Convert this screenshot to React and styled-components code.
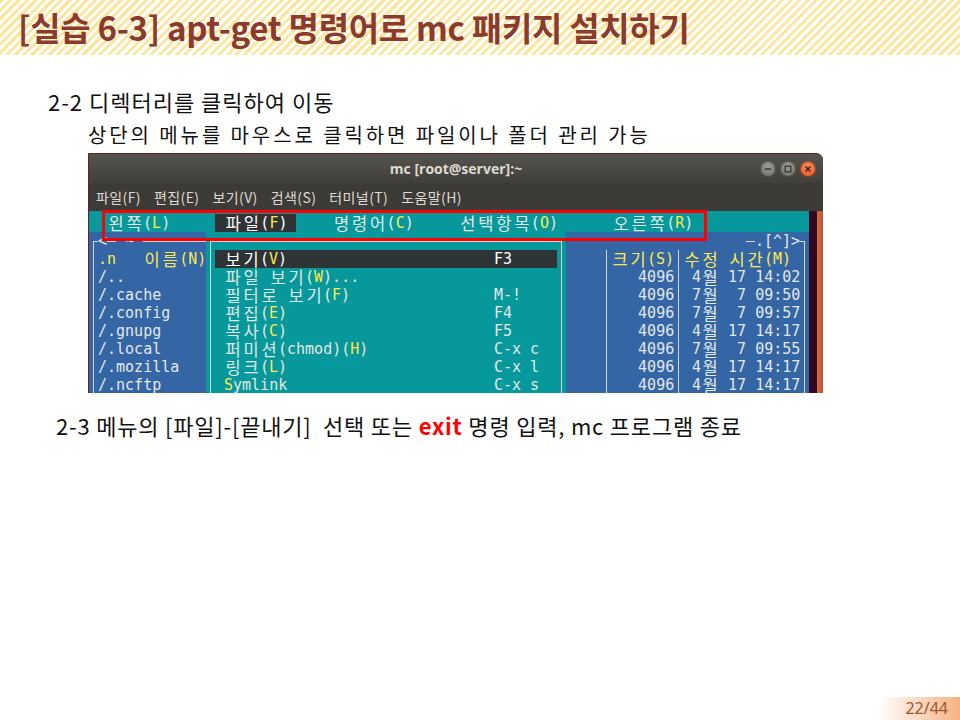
import React from 'react';
import styled, { createGlobalStyle, css } from 'styled-components';

const Global = createGlobalStyle`
  html, body { margin: 0; padding: 0; background: #fff; }
  body { font-family: "Noto Sans CJK KR", "Noto Sans", sans-serif; }
`;

const CELL = 9;
const C = {
  teal: '#06989a',
  blue: '#3465a4',
  dark: '#2e3436',
  text: '#e2e8e6',
  yellow: '#fce94f',
  line: '#d3d7cf',
};

const Page = styled.div`
  width: 960px;
  height: 720px;
  display: flex;
  flex-direction: column;
  overflow: hidden;
  background: #fff;
`;

const TitleBand = styled.header`
  height: 55px;
  flex: none;
  display: flex;
  align-items: center;
  padding-left: 18px;
  box-sizing: border-box;
  background: repeating-linear-gradient(135deg, #fce7a0 0 3px, #ffffff 3px 6px);
`;

const Title = styled.h1`
  margin: 0;
  font-family: "Noto Sans CJK KR", sans-serif;
  font-weight: 700;
  font-size: 33px;
  line-height: 1;
  color: #8b3a2e;
  letter-spacing: -0.3px;
  white-space: nowrap;
`;

const Para = styled.p`
  margin: ${p => p.$mt}px 0 0 ${p => p.$ml}px;
  font-size: ${p => p.$size}px;
  letter-spacing: ${p => p.$ls || 0}px;
  line-height: 30px;
  color: #111;
  white-space: pre;
  flex: none;
`;

const Red = styled.b`
  color: #ff0000;
  font-weight: 700;
`;

/* ---------- screenshot ---------- */
const Shot = styled.div`
  position: relative;
  margin: 3px 0 0 88px;
  width: 735px;
  height: 240px;
  flex: none;
`;

const Win = styled.div`
  height: 100%;
  display: flex;
  flex-direction: column;
  overflow: hidden;
  box-sizing: border-box;
  border-left: 1px solid #6a2020;
  border-top: 1px solid #5a2323;
  border-top-right-radius: 7px;
  background: #3c3b37;
`;

const TitleBar = styled.div`
  height: 29px;
  flex: none;
  display: grid;
  grid-template-columns: 1fr auto 1fr;
  align-items: center;
  background: linear-gradient(#55534d, #403f3b);
`;

const WinTitle = styled.div`
  grid-column: 2;
  font-family: "Open Sans", "Noto Sans", sans-serif;
  font-weight: 700;
  font-size: 14px;
  color: #dfdbd2;
  white-space: nowrap;
`;

const Btns = styled.div`
  grid-column: 3;
  justify-self: end;
  display: flex;
  gap: 4px;
  padding-right: 7px;
`;

const WinBtn = styled.div`
  width: 16px;
  height: 16px;
  border-radius: 50%;
  display: flex;
  align-items: center;
  justify-content: center;
  box-shadow: inset 0 0 0 1px rgba(0, 0, 0, 0.35);
  background: ${p =>
    p.$close
      ? 'radial-gradient(circle at 50% 35%, #f68c5c, #de4f1e)'
      : 'radial-gradient(circle at 50% 35%, #a09d95, #66645e)'};
`;

const MenuBar = styled.div`
  height: 28px;
  flex: none;
  display: flex;
  align-items: center;
  gap: 13px;
  padding-left: 7px;
  font-family: "Noto Sans CJK KR", sans-serif;
  font-size: 14px;
  letter-spacing: 0.4px;
  color: #dfdbd2;
  background: #3c3b37;
`;

const Terminal = styled.div`
  flex: 1;
  display: flex;
  overflow: hidden;
`;

const MC = styled.div`
  width: ${80 * CELL}px;
  flex: none;
  display: flex;
  flex-direction: column;
  padding-top: 3px;
  background: ${C.teal};
`;

const Gutter = styled.div`
  width: 8px;
  flex: none;
  background: #300a24;
`;

const ScrollBar = styled.div`
  width: 6px;
  flex: none;
  background: linear-gradient(90deg, #d46a43, #c0552f);
`;

const Row = styled.div`
  display: flex;
  height: 18px;
  flex: none;
`;

const Seg = styled.div`
  width: ${p => p.$n * CELL}px;
  flex: none;
  height: 18px;
  background: ${p => p.$bg};
  color: ${p => p.$fg || C.text};
  font: 15px/18px "DejaVu Sans Mono", monospace;
  white-space: pre;
`;

const lineImg = `linear-gradient(${C.line}, ${C.line})`;
const ruleBg = {
  v: css`
    background-image: ${lineImg};
    background-size: 1px 100%;
    background-position: 4px 0;
  `,
  h: css`
    background-image: ${lineImg};
    background-size: 100% 1px;
    background-position: 0 9px;
  `,
  tl: css`
    background-image: ${lineImg}, ${lineImg};
    background-size: 1px 9px, 5px 1px;
    background-position: 4px 9px, 4px 9px;
  `,
  tr: css`
    background-image: ${lineImg}, ${lineImg};
    background-size: 1px 9px, 5px 1px;
    background-position: 4px 9px, 0 9px;
  `,
};

const Rule = styled.div`
  width: ${p => (p.$n || 1) * CELL}px;
  flex: none;
  height: 18px;
  background-color: ${p => p.$bg};
  background-repeat: no-repeat;
  ${p => ruleBg[p.$k]}
`;

/* one double-width terminal cell holding a Hangul syllable */
const Wide = styled.span`
  display: inline-block;
  width: ${2 * CELL}px;
  height: 18px;
  vertical-align: top;
  text-align: center;
  font-family: "Noto Sans CJK KR", sans-serif;
  font-size: 16.5px;
  line-height: 18px;
`;

const Hk = styled.span`
  color: ${C.yellow};
`;

const MenuSel = styled.span`
  display: inline-block;
  height: 18px;
  vertical-align: top;
  background: ${C.dark};
  color: #fff;
`;

const Item = styled.div`
  width: ${38 * CELL}px;
  flex: none;
  display: flex;
  height: 18px;
  background: ${p => (p.$active ? C.dark : C.teal)};
  color: ${p => (p.$active ? '#fff' : C.text)};
  font: 15px/18px "DejaVu Sans Mono", monospace;
  white-space: pre;
`;

const ItemLabel = styled.span`
  width: ${31 * CELL}px;
  padding-left: ${CELL}px;
  box-sizing: border-box;
  flex: none;
`;

const ItemKey = styled.span`
  flex: 1;
`;

const RedBox = styled.div`
  position: absolute;
  left: 14px;
  top: 57px;
  width: 605px;
  height: 31px;
  box-sizing: border-box;
  border: 3px solid #ff0000;
  pointer-events: none;
`;

/* ---------- footer ---------- */
const Footer = styled.footer`
  margin-top: auto;
  display: flex;
  justify-content: flex-end;
  flex: none;
`;

const PageNum = styled.div`
  height: 23px;
  line-height: 23px;
  padding: 0 12px 0 27px;
  font-family: "Noto Sans", sans-serif;
  font-size: 16px;
  color: #a4532c;
  background: linear-gradient(90deg, rgba(255, 255, 255, 0), #f7b283);
`;

/* ---------- helpers ---------- */
const isHangul = ch => /[\uAC00-\uD7A3]/.test(ch);
function mono(str, kp) {
  const out = [];
  let buf = '';
  Array.from(str).forEach((ch, i) => {
    if (isHangul(ch)) {
      if (buf) {
        out.push(buf);
        buf = '';
      }
      out.push(<Wide key={kp + i}>{ch}</Wide>);
    } else {
      buf += ch;
    }
  });
  if (buf) out.push(buf);
  return out;
}
function rich(str) {
  return str.split(/(\{[^}]*\})/).map((part, i) =>
    part.startsWith('{') ? (
      <Hk key={i}>{mono(part.slice(1, -1), i + '-')}</Hk>
    ) : (
      <React.Fragment key={i}>{mono(part, i + '-')}</React.Fragment>
    )
  );
}

const files = ['/..', '/.cache', '/.config', '/.gnupg', '/.local', '/.mozilla', '/.ncftp'];
const dates = [
  ' 4월 17 14:02',
  ' 7월  7 09:50',
  ' 7월  7 09:57',
  ' 4월 17 14:17',
  ' 7월  7 09:55',
  ' 4월 17 14:17',
  ' 4월 17 14:17',
];
const items = [
  ['보기({V})', 'F3'],
  ['파일 보기({W})...', ''],
  ['필터로 보기({F})', 'M-!'],
  ['편집({E})', 'F4'],
  ['복사({C})', 'F5'],
  ['퍼미션(chmod)({H})', 'C-x c'],
  ['링크({L})', 'C-x l'],
  ['{S}ymlink', 'C-x s'],
];

const Icon = ({ kind }) => (
  <svg width="8" height="8" viewBox="0 0 8 8">
    {kind === 'min' && <path d="M1 4h6" stroke="#36352f" strokeWidth="1.6" />}
    {kind === 'max' && <rect x="1.2" y="1.2" width="5.6" height="5.6" fill="none" stroke="#36352f" strokeWidth="1.3" />}
    {kind === 'close' && <path d="M1.5 1.5l5 5M6.5 1.5l-5 5" stroke="#4a1a0c" strokeWidth="1.5" />}
  </svg>
);

function PanelRow({ i }) {
  const r = i - 2;
  const item = items[r];
  return (
    <Row>
      <Rule $k="v" $bg={C.blue} />
      {i === 2 ? (
        <Seg $n={12} $bg={C.blue} $fg={C.yellow}>{rich('.n   이름(N)')}</Seg>
      ) : (
        <Seg $n={12} $bg={C.blue}>{files[r - 1]}</Seg>
      )}
      <Rule $k="v" $bg={C.teal} />
      <Item $active={i === 2}>
        <ItemLabel>{rich(item[0])}</ItemLabel>
        <ItemKey>{item[1]}</ItemKey>
      </Item>
      <Rule $k="v" $bg={C.teal} />
      <Seg $n={4} $bg={C.blue} />
      <Rule $k="v" $bg={C.blue} />
      {i === 2 ? (
        <>
          <Seg $n={7} $bg={C.blue} $fg={C.yellow}>{rich('크기(S)')}</Seg>
          <Rule $k="v" $bg={C.blue} />
          <Seg $n={13} $bg={C.blue} $fg={C.yellow}>{rich('수정 시간(M) ')}</Seg>
        </>
      ) : (
        <>
          <Seg $n={7} $bg={C.blue}>{'   4096'}</Seg>
          <Rule $k="v" $bg={C.blue} />
          <Seg $n={13} $bg={C.blue}>{mono(dates[r - 1], 'd')}</Seg>
        </>
      )}
      <Rule $k="v" $bg={C.blue} />
    </Row>
  );
}

export default function App() {
  return (
    <>
      <Global />
      <Page>
        <TitleBand>
          <Title>[실습 6-3] apt-get 명령어로 mc 패키지 설치하기</Title>
        </TitleBand>

        <Para $mt={31} $ml={48} $size={22} $ls={1}>2-2 디렉터리를 클릭하여 이동</Para>
        <Para $mt={4} $ml={88} $size={20} $ls={2.9}>상단의 메뉴를 마우스로 클릭하면 파일이나 폴더 관리 가능</Para>

        <Shot>
          <Win>
            <TitleBar>
              <WinTitle>mc [root@server]:~</WinTitle>
              <Btns>
                <WinBtn><Icon kind="min" /></WinBtn>
                <WinBtn><Icon kind="max" /></WinBtn>
                <WinBtn $close><Icon kind="close" /></WinBtn>
              </Btns>
            </TitleBar>
            <MenuBar>
              <span>파일(F)</span>
              <span>편집(E)</span>
              <span>보기(V)</span>
              <span>검색(S)</span>
              <span>터미널(T)</span>
              <span>도움말(H)</span>
            </MenuBar>
            <Terminal>
              <MC>
                <Row>
                  <Seg $n={80} $bg={C.teal}>
                    {rich('  왼쪽({L})     ')}
                    <MenuSel>{rich(' 파일({F}) ')}</MenuSel>
                    {rich('    명령어({C})     선택항목({O})      오른쪽({R})')}
                  </Seg>
                </Row>
                <Row>
                  <Rule $k="tl" $bg={C.blue} />
                  <Seg $n={1} $bg={C.blue}>{'<'}</Seg>
                  <Rule $k="h" $bg={C.blue} />
                  <Seg $n={3} $bg={C.blue}>{' ~ '}</Seg>
                  <Rule $k="h" $n={7} $bg={C.blue} />
                  <Rule $k="tl" $bg={C.teal} />
                  <Rule $k="h" $n={38} $bg={C.teal} />
                  <Rule $k="tr" $bg={C.teal} />
                  <Seg $n={20} $bg={C.blue} />
                  <Rule $k="h" $bg={C.blue} />
                  <Seg $n={5} $bg={C.blue}>{'.[^]>'}</Seg>
                  <Rule $k="tr" $bg={C.blue} />
                </Row>
                {[2, 3, 4, 5, 6, 7, 8, 9].map(i => (
                  <PanelRow key={i} i={i} />
                ))}
              </MC>
              <Gutter />
              <ScrollBar />
            </Terminal>
          </Win>
          <RedBox />
        </Shot>

        <Para $mt={17} $ml={56} $size={22} $ls={0.8}>
          {'2-3 메뉴의 [파일]-[끝내기]  선택 또는 '}
          <Red>exit</Red>
          {' 명령 입력, mc 프로그램 종료'}
        </Para>

        <Footer>
          <PageNum>22/44</PageNum>
        </Footer>
      </Page>
    </>
  );
}
